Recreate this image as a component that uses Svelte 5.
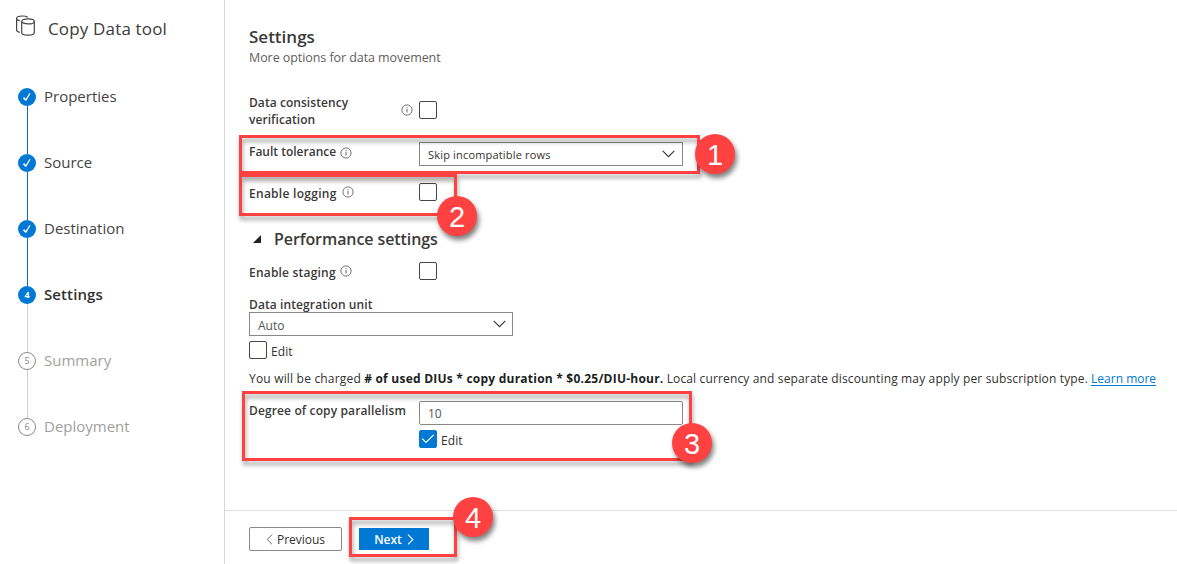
<script>
  const steps = [
    { n: 1, label: 'Properties', state: 'done' },
    { n: 2, label: 'Source', state: 'done' },
    { n: 3, label: 'Destination', state: 'done' },
    { n: 4, label: 'Settings', state: 'current' },
    { n: 5, label: 'Summary', state: 'todo' },
    { n: 6, label: 'Deployment', state: 'todo' }
  ];
</script>

{#snippet info()}
  <svg class="info" width="12" height="12" viewBox="0 0 12 12" fill="none">
    <circle cx="6" cy="6" r="5.100" stroke="#666" stroke-width=".9" />
    <path d="M6 5V8.500" stroke="#666" /><path d="M6 3.200v1.100" stroke="#666" />
  </svg>
{/snippet}

{#snippet chevron()}
  <svg class="chev" width="13" height="8" viewBox="0 0 13 8" fill="none">
    <path d="M.7 .9L6.5 6.7L12.3 .9" stroke="#333" stroke-width="1.1" />
  </svg>
{/snippet}

<div class="app">
  <aside>
    <header>
      <svg width="21" height="22" viewBox="0 0 21 22" fill="none" stroke="#444" stroke-width="1.2">
        <ellipse cx="13" cy="6.4" rx="6.3" ry="2.5" />
        <path d="M6.7 6.4V17.5C6.7 19 9.5 20.2 13 20.2S19.3 19 19.3 17.5V6.4" />
        <path d="M12.8 2.3C11.7 1.4 9.5 1 7.2 1C3.700 1 1.600 2 1.600 3.400V15C1.600 16.200 2.800 17 4.800 17.400M1.600 3.400C1.600 4.600 2.800 5.300 4.800 5.600" />
      </svg>
      <span>Copy Data tool</span>
    </header>
    <ol>
      {#each steps as s}
        <li class={s.state}>
          <span class="dot">
            {#if s.state === 'done'}
              <svg width="10" height="10" viewBox="0 0 10 10" fill="none" stroke="#fff"><path d="M1.600 5.600L3.900 8.200" stroke-width="1.700" /><path d="M3.700 8.400L8 1.200" stroke-width="1.200" /></svg>
            {:else}{s.n}{/if}
          </span>
          <span class="label">{s.label}</span>
        </li>
      {/each}
    </ol>
  </aside>

  <main>
    <section class="content">
      <h1>Settings</h1>
      <p class="sub">More options for data movement</p>

      <div class="row consistency">
        <span class="name semi">Data consistency<br />verification</span>
        {@render info()}
        <span class="box"></span>
      </div>
      <div class="row fault">
        <span class="name"><span class="semi t-fault">Fault tolerance</span>{@render info()}</span>
        <span class="field"><span class="t-skip">Skip incompatible rows</span>{@render chevron()}</span>
      </div>
      <div class="row logging">
        <span class="name"><span class="semi t-log">Enable logging</span>{@render info()}</span>
        <span class="box"></span>
      </div>
      <h2>
        <svg width="8" height="8" viewBox="0 0 8 8"><path d="M8 0V8H0Z" fill="#222" /></svg>
        <span>Performance settings</span>
      </h2>
      <div class="row staging">
        <span class="name"><span class="semi t-stage">Enable staging</span>{@render info()}</span>
        <span class="box"></span>
      </div>
      <div class="semi unit">Data integration unit</div>
      <span class="field auto"><span>Auto</span>{@render chevron()}</span>
      <div class="edit"><span class="box"></span><span>Edit</span></div>
      <p class="charge"><span class="c1">You will be charged</span> <b># of used DIUs * copy duration * $0.25/DIU-hour.</b> <span class="c3">Local currency and separate discounting may apply per subscription type.</span> <a href="#learn">Learn more</a></p>
      <div class="row parallel">
        <span class="name semi">Degree of copy parallelism</span>
        <div>
          <span class="field rounded"><span>10</span></span>
          <div class="edit second">
            <span class="box checked"><svg width="14" height="10" viewBox="0 0 14 10" fill="none"><path d="M1.200 4.700L5 8.500L12.700 .8" stroke="#fff" stroke-width="1.200" /></svg></span><span>Edit</span>
          </div>
        </div>
      </div>
    </section>
    <footer>
      <button class="prev"><svg width="7" height="11" viewBox="0 0 7 11" fill="none"><path d="M6 .7L1.200 5.500L6 10.300" stroke="#666" /></svg><span>Previous</span></button>
      <button class="next"><span>Next</span><svg width="7" height="11" viewBox="0 0 7 11" fill="none"><path d="M1 .7L5.800 5.500L1 10.300" stroke="#fff" stroke-width="1.100" /></svg></button>
    </footer>
  </main>

  <div class="mark m1"></div>
  <div class="mark m2"></div>
  <div class="mark m3"></div>
  <div class="mark m4"></div>
  <div class="badge b1">1</div>
  <div class="badge b2">2</div>
  <div class="badge b3">3</div>
  <div class="badge b4">4</div>
</div>

<style>
  :global(body) { margin: 0; background: #fff; }
  .app { position: relative; display: flex; width: 1177px; height: 564px; overflow: hidden; font-family: 'Open Sans', 'Noto Sans', sans-serif; font-size: 12px; color: #323130; background: #fff; }
  .app * { box-sizing: border-box; }
  svg { display: block; flex: none; }
  span { white-space: nowrap; }
  aside { width: 225px; flex: none; border-right: 1px solid #d6d6d6; }
  header { display: flex; height: 52px; padding: 15px 0 0 15px; }
  header span { margin: 1px 0 0 12px; font-size: 17px; line-height: 26px; letter-spacing: .16px; color: #3b3a39; }
  ol { list-style: none; margin: 35px 0 0; padding: 0 0 0 18px; }
  li { display: flex; position: relative; height: 66px; font-size: 15px; line-height: 20px; color: #444; }
  li:not(:last-child)::after { content: ''; position: absolute; left: 9px; top: 19px; width: 1px; height: 48px; background: #0f6cbd; }
  .dot { display: grid; place-items: center; width: 18px; height: 18px; margin-top: 1px; border-radius: 50%; background: #0078d4; color: #fff; font-size: 9px; font-weight: 700; line-height: 16px; }
  .label { margin: -1px 0 0 8px; }
  .current .label { font-weight: 600; color: #323130; letter-spacing: .1px; }
  li.current::after, li.todo::after { background: #d2d0ce !important; }
  .todo .dot { background: #fff; border: 1px solid #8a8886; color: #8a8886; font-weight: 400; }
  .todo .label { color: #a19f9d; }

  main { flex: 1; display: flex; flex-direction: column; }
  .content { height: 510px; padding: 25px 0 0 24px; }
  h1 { margin: 0; font-size: 17px; font-weight: 600; line-height: 24px; color: #3b3a39; }
  .sub { margin: 0 0 36px; font-size: 12.500px; line-height: 17px; letter-spacing: -.07px; color: #605e5c; }
  .semi { font-weight: 600; letter-spacing: .06px; color: #3b3a39; }
  .row { display: flex; align-items: flex-start; }
  .name { display: flex; width: 170px; line-height: 17px; }
  .box { display: grid; place-items: center; width: 18px; height: 18px; border: 1px solid #484644; border-radius: 2px; background: #fff; }
  .box.checked { background: #0078d4; border-color: #0078d4; }
  .field { display: flex; align-items: center; justify-content: space-between; width: 264px; height: 24px; padding: 1px 7px 0 8px; border: 1px solid #8a8886; color: #555; }
  .field .chev { margin-top: -2px; }
  .auto > span { margin-top: 1px; }
  .auto .chev { margin-right: -1px; }
  .rounded { border-radius: 2px; }
  .consistency { height: 40px; margin-top: -8px; }
  .consistency .name { display: block; width: 152px; }
  .consistency .info { margin-top: 10px; }
  .consistency .box { margin: 7px 0 0 6px; }
  .fault { height: 41px; }
  .fault .name { margin-top: 9px; }
  .fault .info { margin-top: 4px; }
  .t-fault, .t-stage { width: 87px; }
  .t-fault { letter-spacing: 0; }
  .fault .field { margin-top: 8px; font-size: 11px; color: #323130; }
  .t-skip { letter-spacing: .18px; }
  .name .info { margin-left: 4px; }
  .logging { height: 44px; }
  .logging .name { margin-top: 10px; }
  .logging .info { margin-top: 1px; margin-left: 5px; }
  .t-log { width: 88px; letter-spacing: .28px; }
  .t-stage { letter-spacing: .2px; }
  .logging .box { margin-top: 8px; }
  h2 { display: flex; align-items: center; height: 24px; margin: 8px 0 0; padding-left: 4px; font-size: 16px; font-weight: 600; letter-spacing: -.08px; color: #3b3a39; }
  h2 span { margin-left: 13px; }
  .staging { height: 34px; margin-top: 11px; }
  .staging .name { margin-top: 2px; }
  .staging .info { margin-top: 1px; }
  .unit { height: 16px; line-height: 17px; letter-spacing: .1px; }
  .edit { display: flex; margin-top: 5px; height: 18px; line-height: 22px; }
  .edit > span:last-child { margin-left: 4px; letter-spacing: .1px; }
  .charge { margin: 11px 0 0; line-height: 17px; white-space: nowrap; }
  .c1 { letter-spacing: .19px; }
  .charge b { color: #201f1e; letter-spacing: .23px; }
  .c3 { letter-spacing: .145px; }
  .charge a { color: #0078d4; text-underline-offset: 2px; }
  .parallel { margin-top: 14px; }
  .parallel .name { margin-top: 1px; letter-spacing: .13px; }
  footer { display: flex; height: 54px; padding: 16px 0 0 24px; border-top: 1px solid #e1dfdd; }
  button { display: flex; align-items: center; justify-content: center; padding: 0; font: inherit; line-height: 17px; color: #323130; }
  .prev { width: 93px; height: 24px; border: 1px solid #8a8886; border-radius: 2px; background: #fff; gap: 4px; }
  .next { width: 70px; height: 22px; margin: 1px 0 0 17px; border: 0; background: #0078d4; color: #fff; font-weight: 600; gap: 5px; }

  .mark { position: absolute; border: 3px solid #ff4141; filter: drop-shadow(1px 4px 2px rgba(0, 0, 0, .36)); }
  .m1 { left: 239px; top: 135px; width: 461px; height: 39px; }
  .m2 { left: 239px; top: 174px; width: 218px; height: 42px; }
  .m3 { left: 242px; top: 391px; width: 450px; height: 70px; }
  .m4 { left: 349px; top: 517px; width: 108px; height: 40px; }
  .badge { position: absolute; width: 40px; height: 40px; border-radius: 50%; background: #ff4141; color: #fff; font: 29px/42px 'Liberation Sans', Arial, sans-serif; text-align: center; box-shadow: 2px 4px 5px rgba(0, 0, 0, .5); }
  .b1 { left: 695px; top: 134px; }
  .b2 { left: 437px; top: 196px; }
  .b3 { left: 672px; top: 423px; }
  .b4 { left: 453px; top: 497px; }
</style>
